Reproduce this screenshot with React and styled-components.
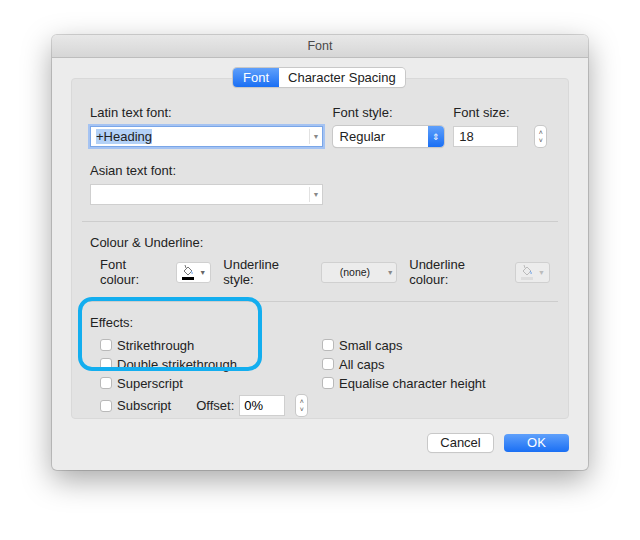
import React from "react";
import styled, { createGlobalStyle } from "styled-components";

const Global = createGlobalStyle`
  html,body{margin:0;background:#fff;}
  body{font-family:"Liberation Sans",Arial,sans-serif;font-size:13px;color:#222;}
`;
const Page = styled.div`width:640px;height:540px;padding:35px 0 0 52px;box-sizing:border-box;`;
const Win = styled.div`
  width:536px;height:435px;background:#ececec;border-radius:5px;box-sizing:border-box;
  box-shadow:0 10px 30px rgba(0,0,0,.35),0 0 0 1px rgba(0,0,0,.15);overflow:hidden;display:flex;flex-direction:column;
`;
const Title = styled.div`height:22px;line-height:22px;text-align:center;color:#4a4a4a;font-size:12.5px;
  background:linear-gradient(#e8e8e8,#d6d6d6);border-bottom:1px solid #bdbdbd;`;
const Body = styled.div`position:relative;padding:10px 19px 0 19px;flex:1;display:flex;flex-direction:column;`;
const Tabs = styled.div`position:absolute;top:10px;left:181px;display:flex;border-radius:4px;overflow:hidden;
  box-shadow:0 0 0 1px #c8c8c8,0 1px 1px rgba(0,0,0,.15);z-index:2;height:19px;`;
const Tab = styled.div`padding:0 ${p=>p.on?10:9}px;line-height:19px;font-size:13px;
  background:${p=>p.on?"linear-gradient(#5fa0fb,#1a6ff4)":"#fff"};color:${p=>p.on?"#fff":"#222"};`;
const Panel = styled.div`margin-top:10px;height:341px;background:#e3e3e3;border:1px solid #d9d9d9;border-radius:4px;
  box-sizing:border-box;padding:26px 18px 0 18px;position:relative;`;
const Grid = styled.div`display:flex;`;
const Col = styled.div`display:flex;flex-direction:column;width:${p=>p.w}px;`;
const Label = styled.div`height:15px;line-height:15px;margin-bottom:${p=>p.mb??6}px;`;
const Field = styled.div`height:${p=>p.h||21}px;width:${p=>p.w}px;background:#fff;box-sizing:border-box;
  border:1px solid ${p=>p.focus?"#7aa6e8":"#cfcfcf"};${p=>p.focus?"box-shadow:0 0 0 2px #a5c3f2;":""}
  display:flex;align-items:center;padding-left:5px;position:relative;`;
const Arrow = styled.span`position:absolute;right:0;top:2px;bottom:2px;width:12px;border-left:1px solid #e2e2e2;
  font-size:7px;color:#888;display:flex;align-items:center;justify-content:center;`;
const Sel = styled.mark`background:#b3d1f7;color:#222;`;
const Popup = styled.div`width:111px;height:21px;background:#fff;border-radius:4px;box-shadow:0 0 0 1px #c8c8c8,0 1px 1px rgba(0,0,0,.2);
  display:flex;align-items:center;padding-left:7px;box-sizing:border-box;position:relative;`;
const PopBtn = styled.span`position:absolute;right:0;top:0;bottom:0;width:16px;border-radius:0 4px 4px 0;
  background:linear-gradient(#5fa0fb,#1a6ff4);color:#fff;font-size:9px;display:flex;align-items:center;justify-content:center;`;
const Stepper = styled.div`width:11px;height:21px;margin-left:9px;border-radius:4px;background:#fff;box-shadow:0 0 0 1px #c8c8c8;
  font-size:7px;line-height:8px;display:flex;flex-direction:column;align-items:center;justify-content:center;color:#555;`;
const Divider = styled.div`height:1px;background:#cdcdcd;margin:${p=>p.m};`;
const Row = styled.div`display:flex;align-items:center;gap:${p=>p.gap||8}px;padding-left:${p=>p.pl||0}px;`;
const Swatch = styled.div`width:35px;height:21px;background:${p=>p.dis?"#ececec":"#fff"};border:1px solid #d0d0d0;border-radius:3px;box-sizing:border-box;
  display:flex;align-items:center;justify-content:center;gap:4px;font-size:7px;color:${p=>p.dis?"#bbb":"#666"};`;
const Dropdown = styled.div`width:77px;height:21px;background:#ececec;border:1px solid #d0d0d0;border-radius:3px;box-sizing:border-box;
  display:flex;align-items:center;justify-content:center;font-size:10.5px;position:relative;padding-right:8px;`;
const Checks = styled.div`display:flex;`;
const CheckCol = styled.div`display:flex;flex-direction:column;width:${p=>p.w}px;gap:5px;padding-left:${p=>p.pl||0}px;`;
const Check = styled.div`display:flex;align-items:center;gap:5px;height:14px;`;
const Box = styled.span`width:12px;height:12px;background:#fff;border:1px solid #b9b9b9;border-radius:3px;box-sizing:border-box;`;
const Small = styled.input`width:46px;height:21px;border:1px solid #cfcfcf;box-sizing:border-box;font:inherit;padding-left:4px;`;
const Highlight = styled.div`position:absolute;left:6px;top:218px;width:176px;height:66px;border:4px solid #13aeef;border-radius:14px;pointer-events:none;`;
const Buttons = styled.div`display:flex;justify-content:flex-end;gap:11px;margin-top:15px;`;
const Btn = styled.div`width:65px;height:18px;line-height:18px;text-align:center;border-radius:4px;font-size:13px;
  ${p=>p.primary?"background:linear-gradient(#5fa0fb,#1a6ff4);color:#fff;":"background:#fff;box-shadow:0 0 0 1px #c8c8c8,0 1px 1px rgba(0,0,0,.15);"}`;

const Bucket = ({c}) => (
  <svg width="14" height="16" viewBox="0 0 14 16">
    <path d="M3 7 L7 3 L11 7 L7 11 Z" fill="none" stroke={c==="dis"?"#bbb":"#777"} strokeWidth="1"/>
    <path d="M5 4 L4 1" stroke={c==="dis"?"#bbb":"#777"}/>
    <path d="M10 7 Q12 9 11 10" stroke="#6aa0e8" fill="none"/>
    <rect x="1" y="13" width="12" height="3" fill={c==="dis"?"#ddd":"#000"}/>
  </svg>
);

const C = ({children}) => <Check><Box/>{children}</Check>;

export default function App(){
  return (<Page><Global/><Win>
    <Title>Font</Title>
    <Body>
      <Tabs><Tab on>Font</Tab><Tab>Character Spacing</Tab></Tabs>
      <Panel>
        <Grid>
          <Col w={251}>
            <Label>Latin text font:</Label>
            <Field w={233} focus><Sel>+Heading</Sel><Arrow>▼</Arrow></Field>
            <Label style={{marginTop:16}}>Asian text font:</Label>
            <Field w={233}><Arrow>▼</Arrow></Field>
          </Col>
          <Col w={125}>
            <Label>Font style:</Label>
            <Popup>Regular<PopBtn>⇕</PopBtn></Popup>
          </Col>
          <Col w={100}>
            <Label>Font size:</Label>
            <Row gap={0}><Field w={65}>18</Field><Stepper><span>˄</span><span>˅</span></Stepper></Row>
          </Col>
        </Grid>
        <Divider m="16px -8px 13px -8px"/>
        <Label mb={7}>Colour &amp; Underline:</Label>
        <Row pl={10} gap={8}>
          <span>Font colour:</span>
          <Swatch><Bucket/>▼</Swatch>
          <span style={{marginLeft:4}}>Underline style:</span>
          <Dropdown>(none)<Arrow style={{border:0}}>▼</Arrow></Dropdown>
          <span style={{marginLeft:4}}>Underline colour:</span>
          <Swatch dis><Bucket c="dis"/>▼</Swatch>
        </Row>
        <Divider m="14px -8px 13px -8px"/>
        <Label mb={8}>Effects:</Label>
        <Checks>
          <CheckCol w={222} pl={10}>
            <C>Strikethrough</C>
            <C>Double strikethrough</C>
            <C>Superscript</C>
            <Row gap={5}><Box/>Subscript<span style={{marginLeft:20}}>Offset:</span><Small defaultValue="0%"/>
              <Stepper style={{marginLeft:6}}><span>˄</span><span>˅</span></Stepper></Row>
          </CheckCol>
          <CheckCol w={200}>
            <C>Small caps</C>
            <C>All caps</C>
            <C>Equalise character height</C>
          </CheckCol>
        </Checks>
        <Highlight/>
      </Panel>
      <Buttons><Btn>Cancel</Btn><Btn primary>OK</Btn></Buttons>
    </Body>
  </Win></Page>);
}
